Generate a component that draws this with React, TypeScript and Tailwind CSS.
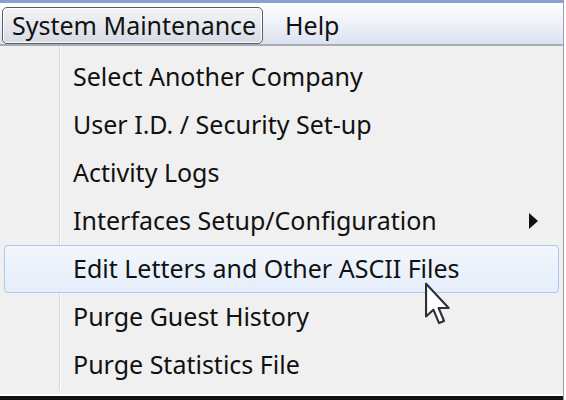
const items = [
    'Select Another Company',
    'User I.D. / Security Set-up',
    'Activity Logs',
    'Interfaces Setup/Configuration',
    'Edit Letters and Other ASCII Files',
    'Purge Guest History',
    'Purge Statistics File',
]

function Cursor() {
    return (
        <svg width="28" height="44" viewBox="0 0 13 21" className="absolute left-[424px] top-[282px]">
            <path
                d="M0.8 0.8 L0.8 16.5 L4.3 13.2 L7 19.6 L9.4 18.6 L6.8 12.4 L11.6 12.4 Z"
                fill="#ffffff"
                stroke="#2b2f3a"
                strokeWidth="1"
                strokeLinejoin="round"
            />
        </svg>
    )
}

export default function App() {
    return (
        <div
            className="relative flex h-[400px] w-[566px] overflow-hidden bg-white text-[#111]"
            style={{ fontFamily: '"Noto Sans", "Open Sans", sans-serif' }}
        >
            <div className="flex w-[564px] flex-col border-r border-[#9aa0aa]">
                <div className="h-[3px] bg-[#86a2d4]" />
                {/* menu bar */}
                <div className="flex h-[45px] items-end gap-[16px] whitespace-nowrap border-b-2 border-[#a9adb5] bg-gradient-to-b from-[#ffffff] via-[#eef1f8] to-[#dbe2f0] pl-[2px]">
                    <div className="flex h-[37px] w-[261px] shrink-0 items-center rounded-[5px] border border-[#5a5d63] bg-gradient-to-b from-[#f4f5f8] to-[#d6dae3] px-[9px] text-[25px] shadow-[inset_0_0_0_1px_#ffffff]">
                        System Maintenance
                    </div>
                    <div className="flex h-[37px] items-center px-[6px] text-[25px]">Help</div>
                </div>
                {/* dropdown panel */}
                <div className="relative flex flex-1 flex-col bg-[#f0f0f0] pb-[5px] pt-[7px]">
                    <div className="absolute bottom-[4px] left-[59px] top-0 w-[2px] border-l border-[#d6d6d6] bg-white" />
                    {items.map((label, i) => (
                        <div
                            key={label}
                            className={`relative mx-[4px] flex h-[48px] items-center whitespace-nowrap rounded-[4px] border pl-[68px] pr-[20px] text-[25px] ${i === 4
                                ? 'border-[#a9c9f0] bg-gradient-to-b from-[#f3f7fd] to-[#e4edf9]'
                                : 'border-transparent'
                                }`}
                        >
                            <span className="flex-1">{label}</span>
                            {i === 3 && (
                                <svg width="9" height="16" viewBox="0 0 9 16">
                                    <path d="M0 0 L9 8 L0 16 Z" fill="#111" />
                                </svg>
                            )}
                        </div>
                    ))}
                </div>
                <div className="h-[2px] bg-white" />
                <div className="h-[4px] bg-[#111]" />
            </div>
            <Cursor />
        </div>
    )
}
